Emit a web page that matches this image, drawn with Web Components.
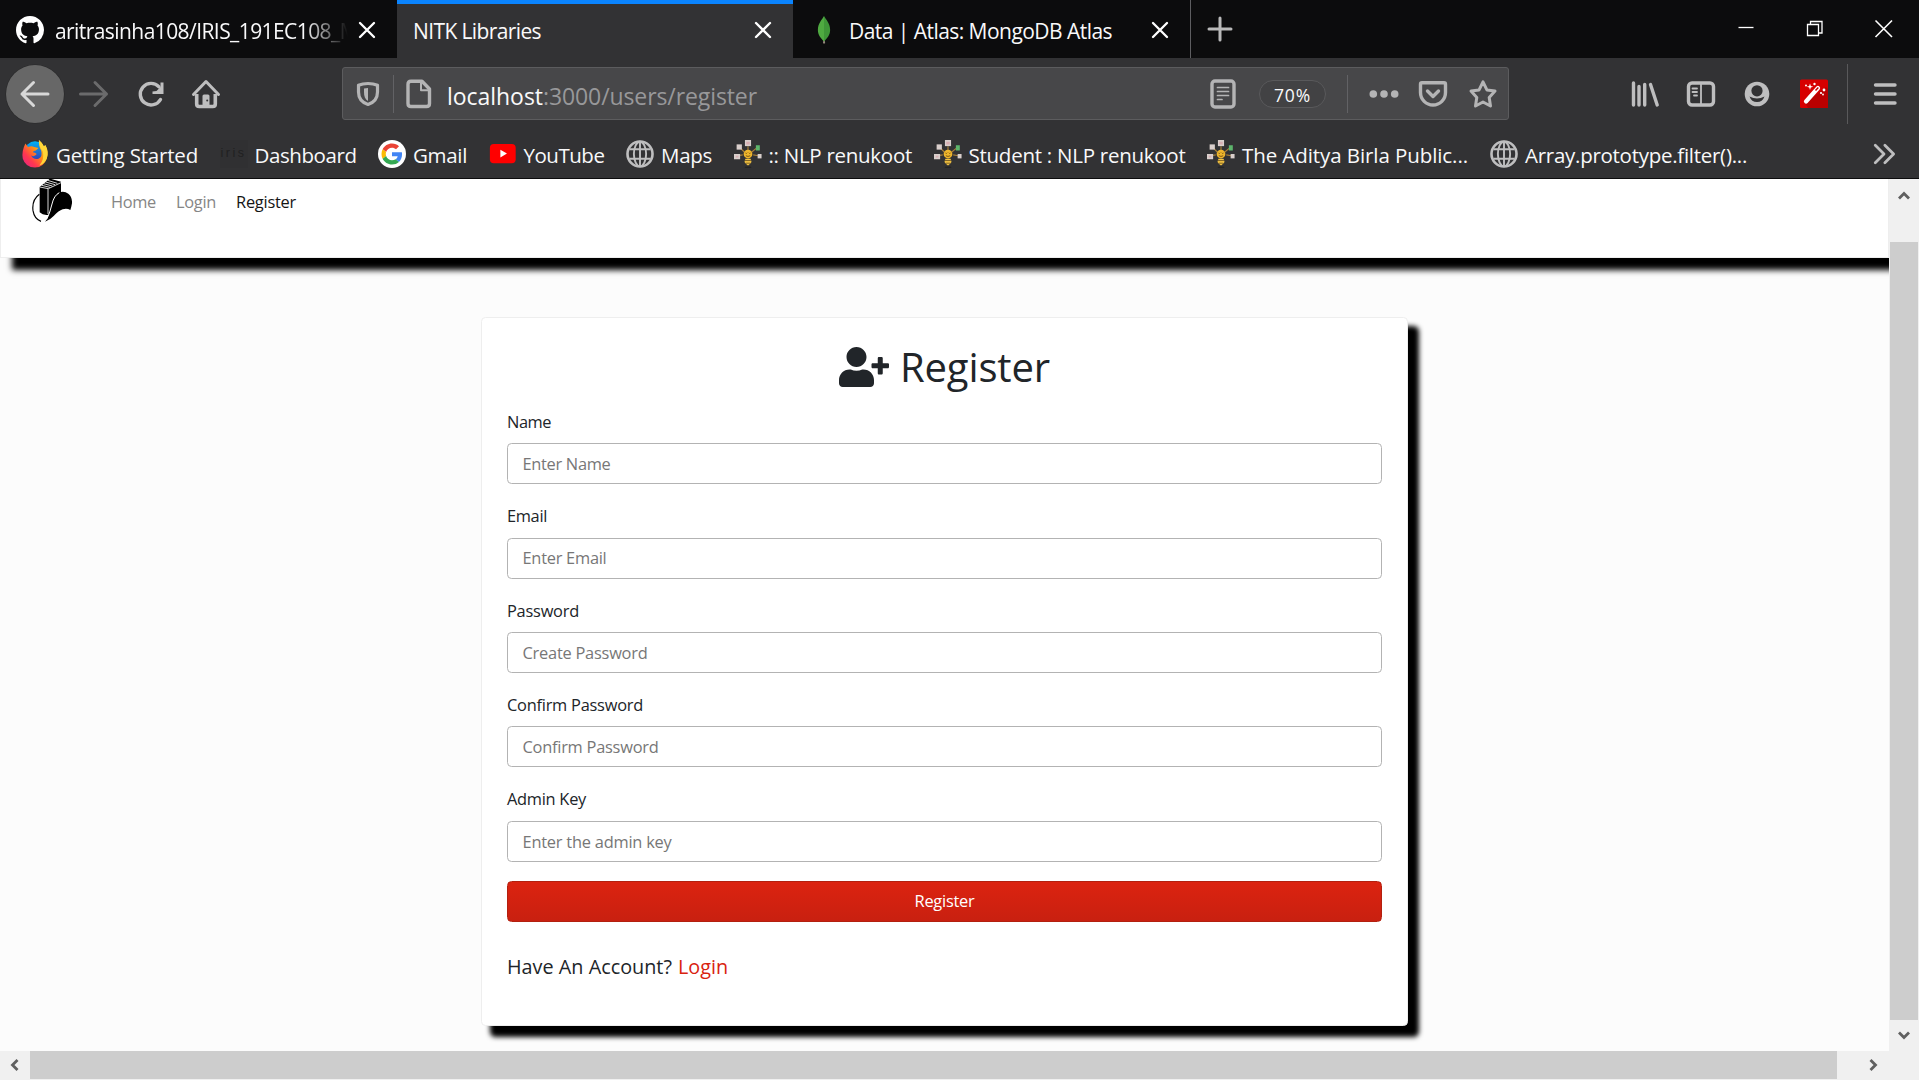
<!DOCTYPE html>
<html lang="en">
<head>
<meta charset="utf-8">
<title>NITK Libraries</title>
<style>
html,body{margin:0;height:100%;overflow:hidden;background:#fcfcfc}
body{font-family:"Open Sans","Noto Sans",sans-serif}
</style>
</head>
<body>
<app-window></app-window>
<script>
const stroke = (w, d, extra = '') => `<path d="${d}" fill="none" stroke="currentColor" stroke-width="${w}" stroke-linecap="round" stroke-linejoin="round" ${extra}/>`;
const ICONS = {
  back: stroke(3, 'M29 16H3M14.500 4.500L3 16L14.500 27.500'),
  forward: stroke(3, 'M2.500 16H28.500M17 4.500L28.500 16L17 27.500'),
  reload: stroke(3.4, 'M25.500 21.500A10.800 10.800 0 1 1 24 8.800') + '<path d="M28.500 4.500v11.500H17.500v-2.500l4-.5 4-4v-4.500z" fill="currentColor"/>',
  home: stroke(3, 'M3.500 16.500L16 3.500L28.500 16.500') + stroke(3.6, 'M6.700 16V26q0 2.500 2.500 2.500H22.800q2.500 0 2.500-2.500V16', 'style="stroke-linecap:butt"') + '<path d="M12.500 28V18q0-1.500 1.500-1.500h4q1.500 0 1.500 1.500v10z" fill="currentColor"/><circle cx="17.200" cy="22.500" r="1" fill="#323234"/>',
  shield: stroke(3.2, 'M16 5.500Q21.500 5.500 25.500 7.300V14C25.500 20.500 22 24.500 16 26.500C10 24.500 6.500 20.500 6.500 14V7.300Q10.500 5.500 16 5.500Z') + '<path d="M16 10v13c-3-2-4-4.500-4-9v-3.400q2-.6 4-.6z" fill="currentColor"/>',
  page: stroke(3.4, 'M8 3.300H19L26.500 11V25.500q0 3-3 3H8q-3 0-3-3V6.300q0-3 3-3z') + stroke(2, 'M18 4v8.200h8.500'),
  reader: '<rect x="5" y="3" width="22" height="26" rx="3" fill="none" stroke="currentColor" stroke-width="3.400"/>' + stroke(1.700, 'M10.500 9.500H21.500M10.500 13.500H21.500M10.500 17.500H21.500M10.500 21.500H15'),
  dots: '<g fill="currentColor"><circle cx="5.300" cy="16" r="3.800"/><circle cx="16" cy="16" r="3.800"/><circle cx="26.700" cy="16" r="3.800"/></g>',
  pocket: stroke(3.400, 'M5 4.800H27q1.500 0 1.500 1.500V14.500A12.500 12.500 0 0 1 3.500 14.500V6.300q0-1.500 1.500-1.500z') + stroke(3.400, 'M10.500 13L16 18.500L21.500 13'),
  star: stroke(3, 'M16 3.800L19.900 11.900L28 13.100L22.200 19.500L23.500 28L16 24L8.500 28L9.800 19.500L4 13.100L12.100 11.900Z'),
  library: stroke(3.400, 'M4.500 5V27M10 8.500V27M15.700 6.500V27M21.500 6.500L28.200 27'),
  sidebar: '<rect x="3.500" y="5" width="25" height="22" rx="3.500" fill="none" stroke="currentColor" stroke-width="3.400"/>' + stroke(1.800, 'M16 6V26M7.500 10.500H12M7.500 14H12M9 17.500H12'),
  account: '<circle cx="16" cy="16" r="12.300" fill="currentColor"/><circle cx="16" cy="12.800" r="5.600" fill="#323234"/><path d="M8.500 18.500Q16 22.500 23.500 18.500Q21.500 24 16 24T8.500 18.500z" fill="#323234"/>',
  wand: '<rect x="2" y="1.500" width="28" height="28.500" rx="1.500" fill="#d70000"/><path d="M28 9L30 11V30H10L7 25z" fill="#b90000"/><path d="M8 23.500L20 10" stroke="#fff" stroke-width="4.200" stroke-linecap="round"/><path d="M17.500 12.500L20.300 9.500" stroke="#c80000" stroke-width="1.500"/><g fill="#fff"><path d="M12 5.500l.8 2.500 2.500.8-2.500.8-.8 2.500-.8-2.500-2.500-.8 2.500-.8z"/><circle cx="16.500" cy="6" r="1.200"/><circle cx="8" cy="7.500" r="1"/><circle cx="26" cy="12" r="1.400"/><circle cx="23" cy="15" r="1.100"/><circle cx="25" cy="16.500" r=".9"/></g>',
  menu: stroke(3.400, 'M5.500 7H25M5.500 16H25M5.500 25H25'),
  close: stroke(2.700, 'M8 8L24 24M24 8L8 24'),
  plus: stroke(3, 'M16 5V27M5 16H27'),
  more: stroke(3.200, 'M6 6L16 16L6 26M17 6L27 16L17 26'),
  minimize: '<path d="M8.500 15.500H23.500" stroke="currentColor" stroke-width="1.300"/>',
  restore: '<path d="M8.500 12.500h11v11h-11zM11.500 12V9.500h11.500v11.500H20" fill="none" stroke="currentColor" stroke-width="1.300"/>',
  shut: '<path d="M7.500 8.500L24 25M24 8.500L7.500 25" stroke="currentColor" stroke-width="1.600"/>',
  github: '<g transform="scale(2)"><path fill="#fff" d="M8 0C3.580 0 0 3.580 0 8c0 3.540 2.290 6.530 5.470 7.590.4.070.550-.170.550-.380 0-.190-.010-.820-.010-1.490-2.010.370-2.530-.490-2.690-.940-.090-.230-.480-.940-.820-1.130-.280-.150-.680-.520-.010-.530.630-.010 1.080.580 1.230.820.720 1.210 1.870.870 2.330.660.070-.520.280-.870.510-1.070-1.780-.2-3.640-.890-3.640-3.950 0-.870.310-1.590.820-2.150-.080-.2-.360-1.020.080-2.120 0 0 .670-.210 2.200.820.640-.180 1.320-.270 2-.270s1.360.090 2 .270c1.530-1.040 2.200-.820 2.200-.820.440 1.100.160 1.920.080 2.120.510.560.820 1.270.820 2.150 0 3.070-1.870 3.750-3.650 3.950.290.250.540.730.540 1.480 0 1.070-.010 1.930-.010 2.200 0 .210.150.460.550.380A8.010 8.010 0 0 0 16 8c0-4.420-3.580-8-8-8z"/></g>',
  leaf: '<path d="M16 25l-.6 6h1.400z" stroke="#b8a999" stroke-width=".6" fill="#b8a999"/><path d="M16 0C14 4 9 8 9 16c0 6 3.500 9.500 7 13z" fill="#4faa41"/><path d="M16 0c2 4 7 8 7 16 0 6-3.500 9.500-7 13z" fill="#3f9638"/>',
  firefox: '<defs><linearGradient id="f" x1="1" y1="0" x2="0" y2="1"><stop offset="0" stop-color="#fff44f"/><stop offset=".4" stop-color="#ff980e"/><stop offset=".7" stop-color="#ff3750"/><stop offset="1" stop-color="#e0208c"/></linearGradient><linearGradient id="b" x1="0" y1="0" x2="0" y2="1"><stop offset="0" stop-color="#00b3f4"/><stop offset="1" stop-color="#3a35b0"/></linearGradient></defs><circle cx="16" cy="13" r="11.500" fill="url(#b)"/><path d="M5 4L8 8Q12 6 15 8L20 9L17 12Q14 12 13.500 14Q16 14 18 16Q15 20 11.500 17.500Q14 23 20 21.500Q25 19 23 12Q20 7 20.500 0Q24 3 26 7L28 6Q32 14 29.500 21Q26 31 16 31.500Q5 31 2 21Q.5 13 5 4Z" fill="url(#f)"/><path d="M20.500 0Q24 3 26 7L28 6Q32 14 29.500 21Q27 27 21 29Q27 22 25 13Q20 7 20.500 0Z" fill="#ffd638"/>',
  google: '<circle cx="16" cy="16" r="16" fill="#fff"/><g transform="translate(4 4) scale(.5)"><path fill="#EA4335" d="M24 9.500c3.540 0 6.710 1.220 9.210 3.600l6.850-6.850C35.900 2.380 30.470 0 24 0 14.620 0 6.510 5.380 2.560 13.220l7.980 6.190C12.430 13.720 17.740 9.500 24 9.500z"/><path fill="#4285F4" d="M46.980 24.550c0-1.570-.150-3.090-.380-4.550H24v9.020h12.940c-.580 2.960-2.260 5.480-4.780 7.180l7.730 6c4.510-4.180 7.090-10.360 7.090-17.650z"/><path fill="#FBBC05" d="M10.530 28.590c-.480-1.450-.760-2.990-.760-4.590s.270-3.140.760-4.590l-7.980-6.190C.920 16.460 0 20.120 0 24c0 3.880.920 7.540 2.560 10.780l7.970-6.190z"/><path fill="#34A853" d="M24 48c6.480 0 11.930-2.130 15.890-5.810l-7.730-6c-2.150 1.450-4.920 2.300-8.160 2.300-6.260 0-11.570-4.220-13.470-9.910l-7.980 6.190C6.510 42.620 14.620 48 24 48z"/></g>',
  youtube: '<rect x="1" y="4.500" width="29.500" height="22" rx="4.500" fill="#f00"/><path d="M13 11v9l7.500-4.500z" fill="#fff"/>',
  globe: '<g fill="none" stroke="currentColor"><circle cx="16" cy="16" r="14.300" stroke-width="3"/><ellipse cx="16" cy="16" rx="7" ry="14" stroke-width="2.200"/><path d="M16 2V30M4 10.500H28M4 21.500H28" stroke-width="2.200"/></g>',
  bee: '<g stroke="#a98038" stroke-width="1.300" fill="none"><path d="M16 14V7M12 14L7 9M20 14L26 9M10 17L4 18M22 17L28 18"/></g><g fill="#d9cfcc"><rect x="12.500" y="0" width="7" height="7"/><rect x="3" y="5" width="6" height="6"/><rect x="0" y="16" width="7" height="6"/><rect x="27" y="16" width="4.500" height="5"/></g><path d="M14 2h4v3h-4zM2 18h3v2H2z" fill="#d8aeb2"/><rect x="25" y="6" width="4.500" height="6" fill="#5db56c"/><circle cx="16" cy="16" r="5" fill="#efb62c"/><path d="M13 14.500l1 1 1-1M17 14.500l1 1 1-1M13.500 18q2.500 1.500 5 0" stroke="#6b4a10" fill="none"/><path d="M13 21.500h6l1 3.500q-2 3-4 4Q14 28 12 25z" fill="#f5c443"/><path d="M12.500 23.500h7M13.500 26.500h5" stroke="#6b5420" stroke-width="1"/><ellipse cx="16" cy="31" rx="4" ry=".7" fill="#222"/>'
};

class UiIcon extends HTMLElement {
  connectedCallback() {
    const s = this.getAttribute('size') || 32;
    const root = this.shadowRoot || this.attachShadow({mode: 'open'});
    root.innerHTML = `<style>:host{display:block;flex:none;width:${s}px;height:${s}px}svg{display:block;overflow:visible}</style><svg width="${s}" height="${s}" viewBox="0 0 32 32">${ICONS[this.getAttribute('name')]}</svg>`;
  }
}
customElements.define('ui-icon', UiIcon);

/* One line of text whose tracking is adjusted so that it fills the width in "w". */
class FitText extends HTMLElement {
  connectedCallback() {
    const root = this.shadowRoot || this.attachShadow({mode: 'open'});
    root.innerHTML = `<style>:host{display:inline-block;white-space:nowrap;flex:none}</style><slot></slot>`;
    const n = this.textContent.length, w = +this.getAttribute('w');
    if (w) {
      const nat = this.getBoundingClientRect().width;
      this.style.letterSpacing = ((w - nat) / n).toFixed(3) + 'px';
    }
  }
}
customElements.define('fit-text', FitText);

class BrowserTab extends HTMLElement {
  connectedCallback() {
    const icon = this.getAttribute('icon');
    this.attachShadow({mode: 'open'}).innerHTML = `<style>
      :host{display:flex;align-items:center;box-sizing:border-box;width:397px;height:58px;padding:2px 16px 0 16px;color:#f9f9fa;font-size:21px;line-height:30px}
      :host([icon=leaf]){padding-left:17px}
      :host([active]){background:#323234;border-top:4px solid #0a84ff;padding-top:0;padding-bottom:2px;width:396px}
      .label{flex:1;overflow:hidden;display:flex;margin-right:5px;padding-top:1px}
      :host([fade]) .label{-webkit-mask:linear-gradient(90deg,#000 85%,transparent);mask:linear-gradient(90deg,#000 85%,transparent)}
      .fav{margin-right:11px}
      .x{color:#fff}
    </style>${icon ? `<ui-icon class="fav" size="28" name="${icon}"></ui-icon>` : ''}<div class="label"><slot></slot></div><ui-icon class="x" name="close" size="28"></ui-icon>`;
  }
}
customElements.define('browser-tab', BrowserTab);

class TabStrip extends HTMLElement {
  connectedCallback() {
    this.attachShadow({mode: 'open'}).innerHTML = `<style>
      :host{display:flex;height:58px;background:#0c0c0d;color:#fff}
      .new{margin:13px 0 0 13px;color:#b9b9ba}
      .div{width:1px;background:#5d5d60}
      .win{display:flex;gap:37px;margin:12px 19px 0 auto;height:32px}
    </style>
    <browser-tab icon="github" fade><fit-text w="303">aritrasinha108/IRIS_191EC108_M</fit-text></browser-tab>
    <browser-tab active><fit-text w="128">NITK Libraries</fit-text></browser-tab>
    <browser-tab icon="leaf"><fit-text w="263">Data | Atlas: MongoDB Atlas</fit-text></browser-tab>
    <div class="div"></div>
    <ui-icon class="new" name="plus"></ui-icon>
    <div class="win"><ui-icon name="minimize"></ui-icon><ui-icon name="restore"></ui-icon><ui-icon name="shut"></ui-icon></div>`;
  }
}
customElements.define('tab-strip', TabStrip);

class AddressBar extends HTMLElement {
  connectedCallback() {
    this.attachShadow({mode: 'open'}).innerHTML = `<style>
      :host{display:flex;align-items:center;box-sizing:border-box;width:1167px;height:53px;background:#474749;border:1px solid #5c5c5e;border-radius:3px;padding:0 9px;color:#b4b4b5}
      .sep{width:1px;height:38px;background:#626265}
      .url{display:flex;margin:5px auto 0 12px;font-size:23px;line-height:32px;color:#98989a}
      .url b{font-weight:400;color:#f9f9fa}
      .zoom{box-sizing:border-box;width:67px;height:28px;border:1px solid #59595b;border-radius:14px;background:#424244;color:#f9f9fa;font-size:17.500px;line-height:28px;text-align:center;margin:0 21px 0 20px}
    </style>
    <ui-icon name="shield"></ui-icon><div class="sep" style="margin:0 9px"></div><ui-icon name="page"></ui-icon>
    <div class="url"><b><fit-text w="96">localhost</fit-text></b><fit-text w="214">:3000/users/register</fit-text></div>
    <ui-icon name="reader"></ui-icon><div class="zoom"><fit-text w="37">70%</fit-text></div><div class="sep" style="margin-right:20px"></div>
    <ui-icon name="dots" style="margin-right:17px"></ui-icon><ui-icon name="pocket" style="margin-right:18px"></ui-icon><ui-icon name="star"></ui-icon>`;
  }
}
customElements.define('address-bar', AddressBar);

class NavToolbar extends HTMLElement {
  connectedCallback() {
    this.attachShadow({mode: 'open'}).innerHTML = `<style>
      :host{display:flex;align-items:center;height:71px;background:#323234;color:#bebebf;padding-left:6px}
      .back{display:flex;align-items:center;justify-content:center;box-sizing:border-box;width:58px;height:58px;border-radius:50%;background:#676767;box-shadow:0 0 0 .6px #29292a;color:#d8d8d8}
      .sep{width:1px;height:60px;background:#59595b;margin:0 21.500px 0 17px}
    </style>
    <div class="back"><ui-icon name="back"></ui-icon></div>
    <ui-icon name="forward" style="margin-left:13.500px;color:#6b6b6c"></ui-icon>
    <ui-icon name="reload" style="margin-left:25px"></ui-icon>
    <ui-icon name="home" style="margin-left:23.500px"></ui-icon>
    <address-bar style="margin-left:120px"></address-bar>
    <ui-icon name="library" style="margin-left:120px"></ui-icon>
    <ui-icon name="sidebar" style="margin-left:24px"></ui-icon>
    <ui-icon name="account" style="margin-left:24px"></ui-icon>
    <ui-icon name="wand" style="margin-left:25px"></ui-icon>
    <div class="sep"></div><ui-icon name="menu"></ui-icon>`;
  }
}
customElements.define('nav-toolbar', NavToolbar);

class BookmarkItem extends HTMLElement {
  connectedCallback() {
    const icon = this.getAttribute('icon');
    this.attachShadow({mode: 'open'}).innerHTML = `<style>
      :host{display:flex;align-items:center;gap:7px;color:#f9f9fa;font-size:20.500px;line-height:28px}
      ui-icon{color:#bebebf}
      .word{box-sizing:border-box;width:28px;height:28px;padding-bottom:2px;display:flex;align-items:center;justify-content:center;background:#303032;color:#202021;font:12.500px/24px "Liberation Sans",sans-serif;letter-spacing:2.500px}
      ::slotted(*){margin-top:2px}
    </style>${icon === 'word' ? '<div class="word">iris</div>' : `<ui-icon name="${icon}" size="28"></ui-icon>`}<slot></slot>`;
  }
}
customElements.define('bookmark-item', BookmarkItem);

class BookmarkBar extends HTMLElement {
  connectedCallback() {
    const items = [['firefox', 142, 'Getting Started'], ['word', 102, 'Dashboard'], ['google', 54, 'Gmail'], ['youtube', 81, 'YouTube'], ['globe', 51, 'Maps'], ['bee', 143.5, ':: NLP renukoot'], ['bee', 217, 'Student : NLP renukoot'], ['bee', 226, 'The Aditya Birla Public...'], ['globe', 222, 'Array.prototype.filter()...']];
    this.attachShadow({mode: 'open'}).innerHTML = `<style>
      :host{display:flex;align-items:center;gap:21.500px;box-sizing:border-box;height:50px;background:#323234;border-bottom:1px solid #0c0c0d;padding:0 21px}
      .more{margin-left:auto;color:#bebebf}
      bookmark-item:last-of-type{margin-left:.5px}
    </style>${items.map(([i, w, t]) => `<bookmark-item icon="${i}"><fit-text w="${w}">${t}</fit-text></bookmark-item>`).join('')}<ui-icon class="more" name="more" size="28"></ui-icon>`;
  }
}
customElements.define('bookmark-bar', BookmarkBar);

class SiteNav extends HTMLElement {
  connectedCallback() {
    this.attachShadow({mode: 'open'}).innerHTML = `<style>
      :host{display:flex;flex:none;box-sizing:border-box;height:79px;width:1889px;background:#fff;border:solid #eee;border-width:0 1px 1px;box-shadow:12px 11.500px 6px 0 #000;padding-left:31px;font-size:16.400px;line-height:24px;color:#868686}
      svg{display:block;width:40px;height:44px;margin:-1px 39px 0 0}
      nav{display:flex;gap:20px;margin-top:11px}
      .on{color:#151515}
    </style>
    <svg viewBox="0 0 120 132"><path d="M23 27L54 2L87 11V42Q99 40 109 47Q121 57 120 76Q118 88 115 96Q104 89 92 94Q80 98 65 114Q54 126 39 131Q47 124 50 110Q34 113 23 103Z"/><path d="M23 27L49 32L87 14M29 22L54 28M35 17L61 24M41 12L69 20M47 7L76 16" fill="none" stroke="#fff" stroke-width="2.500"/><path d="M48 33V108" stroke="#fff" stroke-width="2.500"/><path d="M82 44Q66 52 60 78T45 122" fill="none" stroke="#fff" stroke-width="3"/><path d="M22 49Q-1 66 3 98Q7 123 27 130" fill="none" stroke="#000" stroke-width="3.500"/></svg>
    <nav><fit-text w="45">Home</fit-text><fit-text w="40">Login</fit-text><fit-text class="on" w="60">Register</fit-text></nav>`;
  }
}
customElements.define('site-nav', SiteNav);

class FormField extends HTMLElement {
  connectedCallback() {
    this.attachShadow({mode: 'open'}).innerHTML = `<style>
      :host{display:flex;flex-direction:column;gap:9.400px;font-size:16.400px;line-height:24px;color:#212529}
      .box{box-sizing:border-box;height:41px;border:1px solid #b3b3b3;border-radius:4.500px;background:#fff;color:#777;padding:7.800px 14.500px 0;display:flex}
    </style><slot name="label"></slot><div class="box"><slot></slot></div>`;
  }
}
customElements.define('form-field', FormField);

class RegisterCard extends HTMLElement {
  connectedCallback() {
    const f = [['Name', 44, 'Enter Name', 88], ['Email', 40, 'Enter Email', 84], ['Password', 72, 'Create Password', 125], ['Confirm Password', 136, 'Confirm Password', 136], ['Admin Key', 79, 'Enter the admin key', 149]];
    this.attachShadow({mode: 'open'}).innerHTML = `<style>
      :host{display:flex;flex-direction:column;box-sizing:border-box;width:927px;height:709px;background:#fff;border:1px solid #eee;border-radius:4.500px;box-shadow:10px 10px 5px 1px #000;padding:19px 25px 0;color:#212529}
      h1{display:flex;justify-content:center;margin:0 0 12.900px;font-size:40px;font-weight:400;line-height:60px}
      h1 svg{width:50px;height:40px;margin:9.500px 11px 0 0}
      .fields{display:flex;flex-direction:column;gap:20px}
      .fields fit-text{align-self:flex-start}
      .btn{box-sizing:border-box;height:41px;margin-top:19.300px;border:1px solid #b3200f;border-radius:4.500px;background:linear-gradient(#dc2310,#c82010);color:#fff;text-align:center;font-size:16.400px;line-height:38px}
      p{display:flex;gap:6px;margin:30px 0 0;font-size:19.800px;line-height:30px}
      a{color:#d9230f}
    </style>
    <h1><svg viewBox="0 0 640 512" fill="currentColor"><path d="M624 208h-64v-64c0-8.800-7.200-16-16-16h-32c-8.800 0-16 7.200-16 16v64h-64c-8.800 0-16 7.200-16 16v32c0 8.800 7.200 16 16 16h64v64c0 8.800 7.200 16 16 16h32c8.800 0 16-7.200 16-16v-64h64c8.800 0 16-7.200 16-16v-32c0-8.800-7.200-16-16-16zm-400 48c70.700 0 128-57.300 128-128S294.700 0 224 0 96 57.300 96 128s57.300 128 128 128zm89.600 32h-16.700c-22.200 10.200-46.900 16-72.900 16s-50.600-5.800-72.900-16h-16.700C60.200 288 0 348.200 0 422.400V464c0 26.500 21.500 48 48 48h352c26.500 0 48-21.500 48-48v-41.600c0-74.200-60.200-134.400-134.400-134.400z"/></svg><fit-text w="150">Register</fit-text></h1>
    <div class="fields">${f.map(([l, lw, p, pw]) => `<form-field><fit-text slot="label" w="${lw}">${l}</fit-text><fit-text w="${pw}">${p}</fit-text></form-field>`).join('')}</div>
    <div class="btn"><fit-text w="60">Register</fit-text></div>
    <p><fit-text w="165">Have An Account?</fit-text><a><fit-text w="50">Login</fit-text></a></p>`;
  }
}
customElements.define('register-card', RegisterCard);

class ScrollRail extends HTMLElement {
  connectedCallback() {
    const v = this.hasAttribute('vertical');
    const a = r => `<svg viewBox="0 0 12 12" style="transform:rotate(${r}deg)"><path d="M1 8.500L6 3.500L11 8.500" fill="none" stroke="#606060" stroke-width="2.800"/></svg>`;
    this.attachShadow({mode: 'open'}).innerHTML = `<style>
      :host{display:flex;box-sizing:border-box;background:#f0f0f0;${v ? 'flex-direction:column;width:29px;padding:11px 1px 10px 0' : 'height:29px;padding:0 10px 1px 9px'}}
      svg{width:12px;height:12px;flex:none;align-self:center}
      .thumb{background:#cdcdcd;flex:1;${v ? 'margin:40px 0 9px' : 'margin:0 30px 0 9px'}}
    </style>${a(v ? 0 : -90)}<div class="thumb"></div>${a(v ? 180 : 90)}`;
  }
}
customElements.define('scroll-rail', ScrollRail);

class AppWindow extends HTMLElement {
  connectedCallback() {
    this.attachShadow({mode: 'open'}).innerHTML = `<style>
      :host{display:flex;flex-direction:column;width:1919px;height:1080px;overflow:hidden}
      .view{display:grid;grid-template:872px 29px / 1889px 30px;height:901px;background:#f0f0f0}
      .page{background:#fcfcfc;overflow:hidden;display:flex;flex-direction:column}
      register-card{margin:59px 0 0 481px}
      .v{margin-left:1px}
    </style>
    <tab-strip></tab-strip><nav-toolbar></nav-toolbar><bookmark-bar></bookmark-bar>
    <div class="view"><div class="page"><site-nav></site-nav><register-card></register-card></div><scroll-rail vertical class="v"></scroll-rail><scroll-rail></scroll-rail></div>`;
  }
}
customElements.define('app-window', AppWindow);
</script>
</body>
</html>
